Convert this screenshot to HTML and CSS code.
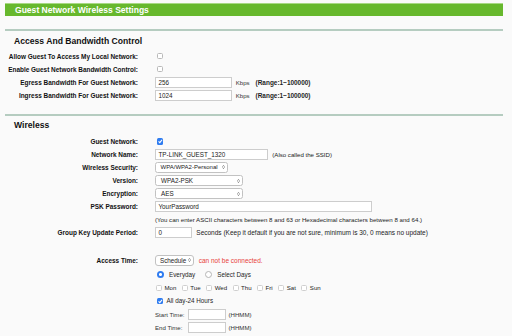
FILE: index.html
```html
<!DOCTYPE html>
<html lang="en">
<head>
  <meta charset="UTF-8" />
  <meta name="viewport" content="width=device-width, initial-scale=1" />
  <title>Guest Network Wireless Settings</title>
  <link rel="stylesheet" href="styles.css">
</head>
<body>
  <div class="page">
    <div class="title-bar">Guest Network Wireless Settings</div>

    <div class="rule"></div>
    <h2>Access And Bandwidth Control</h2>
    <div class="sec-a">
      <div class="row">
        <label>Allow Guest To Access My Local Network:</label>
        <div class="field"><span class="cb"></span></div>
      </div>
      <div class="row">
        <label>Enable Guest Network Bandwidth Control:</label>
        <div class="field"><span class="cb"></span></div>
      </div>
      <div class="row">
        <label>Egress Bandwidth For Guest Network:</label>
        <div class="field"><span class="inp w-bw">256</span><span class="unit">Kbps</span><b class="range">(Range:1~100000)</b></div>
      </div>
      <div class="row">
        <label>Ingress Bandwidth For Guest Network:</label>
        <div class="field"><span class="inp w-bw">1024</span><span class="unit">Kbps</span><b class="range">(Range:1~100000)</b></div>
      </div>
    </div>

    <div class="rule second"></div>
    <h2 class="h-wireless">Wireless</h2>
    <div class="sec-b">
      <div class="row">
        <label>Guest Network:</label>
        <div class="field"><span class="cb on"><svg viewBox="0 0 10 10"><path d="M2.4 5.2 L4.3 7.1 L7.7 2.9" /></svg></span></div>
      </div>
      <div class="row">
        <label>Network Name:</label>
        <div class="field"><span class="inp w-name">TP-LINK_GUEST_1320</span><span class="note">(Also called the SSID)</span></div>
      </div>
      <div class="row">
        <label>Wireless Security:</label>
        <div class="field"><span class="sel w-sec">WPA/WPA2-Personal <svg class="arr" viewBox="0 0 6 10"><path d="M1.2 4 L3 2.2 L4.8 4 M1.2 6 L3 7.8 L4.8 6" /></svg></span></div>
      </div>
      <div class="row">
        <label>Version:</label>
        <div class="field"><span class="sel w-ver">WPA2-PSK <svg class="arr" viewBox="0 0 6 10"><path d="M1.2 4 L3 2.2 L4.8 4 M1.2 6 L3 7.8 L4.8 6" /></svg></span></div>
      </div>
      <div class="row">
        <label>Encryption:</label>
        <div class="field"><span class="sel w-ver">AES <svg class="arr" viewBox="0 0 6 10"><path d="M1.2 4 L3 2.2 L4.8 4 M1.2 6 L3 7.8 L4.8 6" /></svg></span></div>
      </div>
      <div class="row">
        <label>PSK Password:</label>
        <div class="field"><span class="inp w-psk">YourPassword</span></div>
      </div>
      <div class="row">
        <label></label>
        <div class="field"><span class="plain">(You can enter ASCII characters between 8 and 63 or Hexadecimal characters between 8 and 64.)</span></div>
      </div>
      <div class="row">
        <label>Group Key Update Period:</label>
        <div class="field"><span class="inp w-key">0</span><span class="note wide">Seconds (Keep it default if you are not sure, minimum is 30, 0 means no update)</span></div>
      </div>

      <div class="row access">
        <label>Access Time:</label>
        <div class="field"><span class="sel w-sch">Schedule <svg class="arr" viewBox="0 0 6 10"><path d="M1.2 4 L3 2.2 L4.8 4 M1.2 6 L3 7.8 L4.8 6" /></svg></span><span class="warn">can not be connected.</span></div>
      </div>
      <div class="sched">
        <div class="row">
          <label></label>
          <div class="field">
            <span class="radio on"></span><span class="opt">Everyday</span>
            <span class="radio second-radio"></span><span class="opt">Select Days</span>
          </div>
        </div>
        <div class="row">
          <label></label>
          <div class="field days">
            <span class="day"><span class="cb small"></span>Mon</span>
            <span class="day"><span class="cb small"></span>Tue</span>
            <span class="day"><span class="cb small"></span>Wed</span>
            <span class="day"><span class="cb small"></span>Thu</span>
            <span class="day"><span class="cb small"></span>Fri</span>
            <span class="day"><span class="cb small"></span>Sat</span>
            <span class="day"><span class="cb small"></span>Sun</span>
          </div>
        </div>
        <div class="row">
          <label></label>
          <div class="field"><span class="cb on"><svg viewBox="0 0 10 10"><path d="M2.4 5.2 L4.3 7.1 L7.7 2.9" /></svg></span><span class="opt tight">All day-24 Hours</span></div>
        </div>
        <div class="row">
          <label></label>
          <div class="field"><span class="tlabel">Start Time:</span><span class="inp w-time"></span><span class="hhmm">(HHMM)</span></div>
        </div>
        <div class="row">
          <label></label>
          <div class="field"><span class="tlabel">End Time:</span><span class="inp w-time"></span><span class="hhmm">(HHMM)</span></div>
        </div>
      </div>
    </div>
  </div>
</body>
</html>
```

FILE: styles.css
```css
body {
  margin: 0;
  background: #fafafa;
  font-family: "Liberation Sans", Arial, sans-serif;
  color: #1e1e1e;
}
.page {
  padding: 3px 9px 0 5px;
}
.title-bar {
  height: 12px;
  border-top: 1px solid #a8d884;
  background: #67b82d;
  color: #fff;
  font-weight: bold;
  font-size: 8.55px;
  line-height: 13px;
  padding-left: 10px;
}
.rule {
  height: 2px;
  background: #b5ccc0;
  margin-top: 13px;
}
.rule.second {
  margin-top: 12.5px;
}
h2 {
  margin: 0;
  font-size: 8.6px;
  line-height: 11.5px;
  padding: 5px 0 2px 9px;
  color: #111;
}
.h-wireless {
  padding: 4px 0 3.25px 9px;
}
.row {
  display: grid;
  grid-template-columns: 133px 1fr;
  column-gap: 17px;
  align-items: center;
  height: 13px;
}
.sec-b .row {
  height: 13.1px;
}
.sec-b .row.access {
  height: 13px;
  margin-top: 14.45px;
}
.sched {
  margin-top: 1px;
}
.sec-b .sched .row {
  height: 13.2px;
}
label {
  text-align: right;
  font-weight: bold;
  font-size: 6.45px;
  white-space: nowrap;
  color: #111;
}
.field {
  display: flex;
  align-items: center;
  font-size: 6.1px;
  white-space: nowrap;
}

/* text inputs */
.inp {
  box-sizing: border-box;
  height: 11px;
  line-height: 9px;
  border: 1px solid #cdcdcd;
  background: #fff;
  padding-left: 2.5px;
  color: #222;
  font-size: 6.3px;
}
.w-bw { width: 77px; }
.w-name { width: 113px; }
.w-psk { width: 217px; }
.w-key { width: 37px; }
.w-time { width: 37.5px; }

/* selects */
.sel {
  box-sizing: border-box;
  display: flex;
  align-items: center;
  justify-content: space-between;
  height: 11px;
  border: 1px solid #c2c2c2;
  border-radius: 2.5px;
  background: #fff;
  padding: 0 2px 0 5px;
  color: #222;
  font-size: 6.3px;
}
.w-sec { width: 72.5px; font-size: 6px; padding-left: 4.5px; }
.w-ver { width: 88px; }
.w-sch { width: 39px; height: 11.5px; border-radius: 3px; padding-left: 4px; }
.arr {
  width: 3px;
  height: 6px;
  flex: none;
}
.arr path {
  fill: none;
  stroke: #222;
  stroke-width: 1.3;
}

/* checkboxes & radios */
.cb {
  box-sizing: border-box;
  display: inline-block;
  width: 6.5px;
  height: 6.5px;
  margin-left: 1.5px;
  border: 0.7px solid #b9b9b9;
  border-radius: 1.5px;
  background: #fff;
}
.cb.on {
  border: none;
  background: #2f7cf0;
  display: flex;
}
.cb svg {
  width: 100%;
  height: 100%;
}
.cb path {
  fill: none;
  stroke: #fff;
  stroke-width: 1.6;
}
.radio {
  box-sizing: border-box;
  display: inline-block;
  width: 7px;
  height: 7px;
  margin-left: 1.5px;
  border: 0.7px solid #b5b5b5;
  border-radius: 50%;
  background: #fff;
}
.radio.on {
  border: none;
  background: radial-gradient(circle, #fff 0 1.3px, #2f7cf0 1.6px);
}
.radio.second-radio {
  margin-left: 9.5px;
}
.opt {
  margin-left: 5.5px;
  font-size: 6.3px;
}
.opt.tight {
  margin-left: 3.5px;
}
.days {
  gap: 5.5px;
}
.day {
  display: flex;
  align-items: center;
  gap: 2.5px;
}
.cb.small {
  width: 6px;
  height: 6px;
  margin-left: 0;
  border-color: #cfcfcf;
}
.day:first-child .cb.small {
  margin-left: 1px;
}

/* inline texts */
.unit {
  margin-left: 3.7px;
  color: #333;
}
.range {
  margin-left: 6px;
  font-size: 6.45px;
}
.note {
  margin-left: 4.3px;
  color: #222;
}
.note.wide {
  font-size: 6.5px;
}
.plain {
  color: #222;
  font-size: 6.15px;
}
.warn {
  margin-left: 4.7px;
  color: #e8403a;
  font-size: 6.5px;
}
.tlabel {
  width: 33.3px;
  color: #333;
}
.hhmm {
  margin-left: 2.7px;
  color: #333;
}
```
